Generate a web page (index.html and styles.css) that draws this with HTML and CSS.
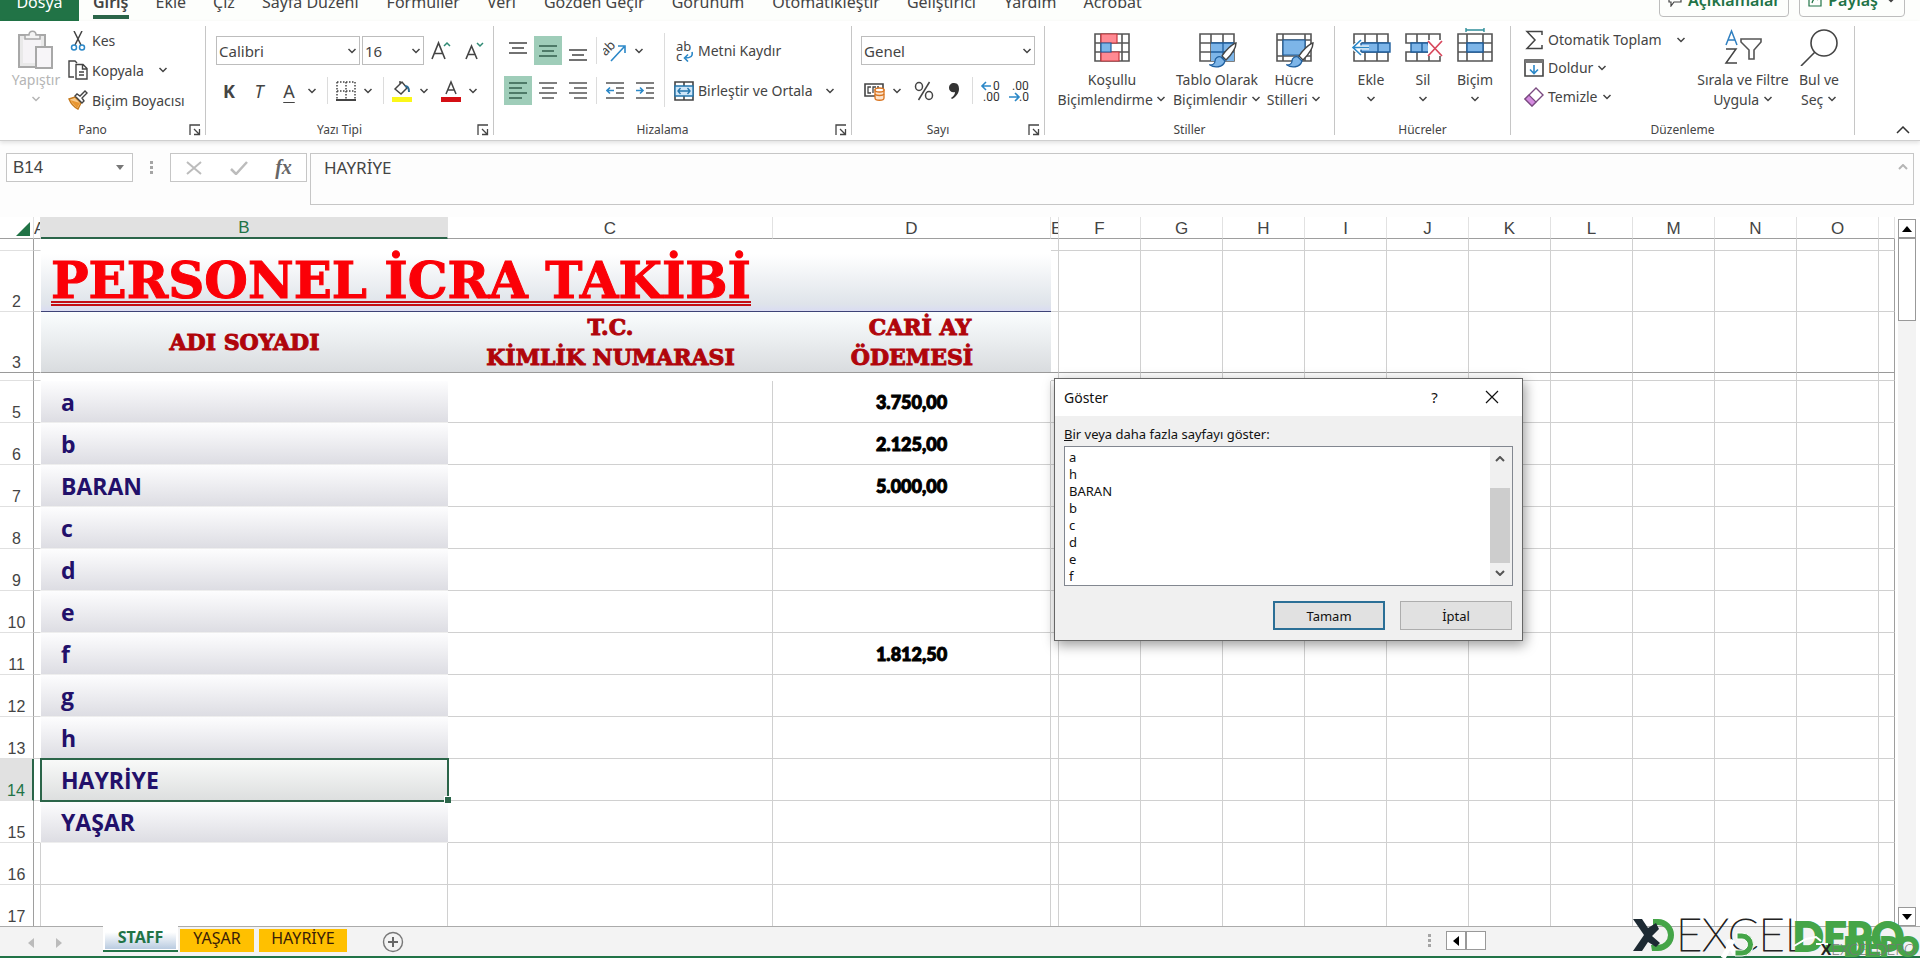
FILE: index.html
```html
<!DOCTYPE html>
<html lang="tr">
<head>
<meta charset="utf-8">
<title>Personel İcra Takibi</title>
<link rel="stylesheet" href="styles.css">
</head>
<body>
<svg class="defs" aria-hidden="true">
  <symbol id="chev" viewBox="0 0 10 6"><path d="M1.5 1l3.5 3.5L8.5 1" fill="none" stroke="currentColor" stroke-width="1.5"/></symbol>
  <symbol id="launch" viewBox="0 0 12 12"><path d="M1 11V1h10M5 5l5 5M10.500 5v5.500H5" fill="none" stroke="#444" stroke-width="1.300"/></symbol>
  <symbol id="brush" viewBox="0 0 28 26"><path d="M27 1c-4 1-11 8-14 13l4 4C22 13 27 6 27 1z" fill="#fff" stroke="#444" stroke-width="1.400"/><path d="M12 15c-3-1-6 1-6 4 0 2-2 4-5 4 4 3 13 3 15-4z" fill="#7db5e8" stroke="#1f5f9e" stroke-width="1.300"/></symbol>
</svg>
<div class="app">
  <header class="tabs">
    <button class="tab file">Dosya</button>
    <nav class="tab-list">
      <button class="tab active">Giriş</button>
      <button class="tab">Ekle</button>
      <button class="tab">Çiz</button>
      <button class="tab">Sayfa Düzeni</button>
      <button class="tab">Formüller</button>
      <button class="tab">Veri</button>
      <button class="tab">Gözden Geçir</button>
      <button class="tab">Görünüm</button>
      <button class="tab">Otomatikleştir</button>
      <button class="tab">Geliştirici</button>
      <button class="tab">Yardım</button>
      <button class="tab">Acrobat</button>
    </nav>
    <div class="share-area">
      <button class="pill comments"><svg width="14" height="14" viewBox="0 0 14 14"><path d="M1 1h12v8H6l-3 4V9H1z" fill="none" stroke="#444" stroke-width="1.200"/></svg>Açıklamalar</button>
      <button class="pill share"><svg width="14" height="14" viewBox="0 0 14 14"><path d="M6 2H1v11h12V7M4 10c1-4 3-6 8-6M9 1l3 3-3 3" fill="none" stroke="#217346" stroke-width="1.200"/></svg>Paylaş<svg class="chev"><use href="#chev"/></svg></button>
    </div>
  </header>

  <section class="ribbon" aria-label="Şerit">
    <div class="group">
      <div class="body pano">
        <button class="big faded"><span class="pic"><svg width="36" height="40" viewBox="0 0 36 40"><path d="M1 5h26v32H1z" fill="#e9e9e9" stroke="#a8a8a8" stroke-width="2"/><path d="M5 9h18v24H5z" fill="#f5f3f6"/><path d="M7 9V5h4c0-5 7-5 7 0h4v4z" fill="#f4f4f4" stroke="#a8a8a8" stroke-width="1.500"/><path d="M18 17h16v21H18z" fill="#f7f5f8" stroke="#a8a8a8" stroke-width="2"/></svg></span><span>Yapıştır</span><svg class="chev"><use href="#chev"/></svg></button>
        <div class="stack">
          <button class="item"><svg width="20" height="20" viewBox="0 0 20 20"><path d="M6 0l7 14M14 0L7 14" stroke="#444" stroke-width="1.500"/><circle cx="6" cy="16.500" r="2.500" fill="none" stroke="#2b88c8" stroke-width="1.500"/><circle cx="14" cy="16.500" r="2.500" fill="none" stroke="#2b88c8" stroke-width="1.500"/></svg>Kes</button>
          <button class="item"><svg width="20" height="20" viewBox="0 0 20 20"><path d="M6 17H1V1h6l2 2M8 4.500h7l4 4V19H8zM14.500 5v4H19M11 12h5M11 15h5" fill="none" stroke="#444" stroke-width="1.400"/></svg>Kopyala<svg class="chev far"><use href="#chev"/></svg></button>
          <button class="item"><svg width="20" height="20" viewBox="0 0 20 20"><path d="M1 9l6-2 6 6-3 6C6 17 3 14 1 9z" fill="#f7c98a" stroke="#c77a1c" stroke-width="1.400"/><path d="M2 10l10 3-3 5z" fill="#e8952f"/><path d="M7 6l2-2 3 2 5-5 2 2-5 5 2 3-2 2z" fill="#fff" stroke="#444" stroke-width="1.400"/></svg>Biçim Boyacısı</button>
        </div>
      </div>
      <div class="foot"><span>Pano</span><button class="launch" aria-label="Pano ayarları"><svg width="12" height="12"><use href="#launch"/></svg></button></div>
    </div>

    <div class="group">
      <div class="body rows font-rows">
        <div class="row inset">
          <span class="combo w-font"><select aria-label="Yazı tipi"><option>Calibri</option></select><svg class="chev"><use href="#chev"/></svg></span>
          <span class="combo w-size"><select aria-label="Boyut"><option>16</option></select><svg class="chev"><use href="#chev"/></svg></span>
          <button class="sq wide" aria-label="Yazı tipini büyüt"><svg width="22" height="22" viewBox="0 0 22 22"><path d="M2 19L8.500 3l6.500 16M4.500 13.500h8" fill="none" stroke="#444" stroke-width="1.600"/><path d="M14 6l3-3 3 3" fill="none" stroke="#2f8a74" stroke-width="1.500"/></svg></button>
          <button class="sq wide" aria-label="Yazı tipini küçült"><svg width="22" height="22" viewBox="0 0 22 22"><path d="M4 19L9.500 6 15 19M6 14.500h7" fill="none" stroke="#444" stroke-width="1.600"/><path d="M15 3l3 3 3-3" fill="none" stroke="#2f8a74" stroke-width="1.500"/></svg></button>
        </div>
        <div class="row">
          <button class="sq wide glyph bold">K</button>
          <button class="sq wide glyph ital">T</button>
          <button class="sq wide glyph under">A</button>
          <button class="dd"><svg class="chev"><use href="#chev"/></svg></button>
          <i class="sep s7"></i>
          <button class="ic"><svg width="20" height="20" viewBox="0 0 20 20"><path d="M1 1h18M1 10h18M1 1v18M10 1v18M19 1v18" fill="none" stroke="#444" stroke-width="1.500" stroke-dasharray="1.500 1.500"/><path d="M0 19h20" stroke="#444" stroke-width="2"/></svg></button>
          <button class="dd g3"><svg class="chev"><use href="#chev"/></svg></button>
          <i class="sep s7"></i>
          <button class="ic"><svg width="20" height="22" viewBox="0 0 20 22"><path d="M3 9l7-7 5 6-6 6zM8 4V1" fill="none" stroke="#444" stroke-width="1.500"/><path d="M13 6c3 0 4 2 4 6" fill="none" stroke="#2b6a94" stroke-width="2"/><path d="M0 17h20v5H0z" fill="#fbf719"/></svg></button>
          <button class="dd g3"><svg class="chev"><use href="#chev"/></svg></button>
          <button class="ic g8"><svg width="20" height="22" viewBox="0 0 20 22"><path d="M5 14L10 2l5 12M6.500 10h7" fill="none" stroke="#444" stroke-width="1.500"/><path d="M0 17h20v5H0z" fill="#d40f14"/></svg></button>
          <button class="dd g3"><svg class="chev"><use href="#chev"/></svg></button>
        </div>
      </div>
      <div class="foot"><span>Yazı Tipi</span><button class="launch" aria-label="Yazı tipi ayarları"><svg width="12" height="12"><use href="#launch"/></svg></button></div>
    </div>

    <div class="group">
      <div class="body align">
        <div class="rows">
          <div class="row gap2">
            <button class="sq"><svg width="18" height="20" viewBox="0 0 18 20"><path d="M0 2h18M3 7h12M0 12h18" stroke="#444" stroke-width="1.600"/></svg></button>
            <button class="sq on"><svg width="18" height="20" viewBox="0 0 18 20"><path d="M0 5h18M3 10h12M0 15h18" stroke="#345f4e" stroke-width="1.600"/></svg></button>
            <button class="sq"><svg width="18" height="20" viewBox="0 0 18 20"><path d="M0 9h18M3 14h12M0 19h18" stroke="#444" stroke-width="1.600"/></svg></button>
            <i class="sep"></i>
            <button class="sq"><svg width="24" height="24" viewBox="0 0 24 24"><text x="1" y="14" transform="rotate(-45 6 14)" font-size="13" font-family="Noto Sans" fill="#444">ab</text><path d="M8 22L21 8M15 7h7v7" fill="none" stroke="#2b88c8" stroke-width="1.600"/></svg></button>
            <button class="dd"><svg class="chev"><use href="#chev"/></svg></button>
          </div>
          <div class="row gap2">
            <button class="sq on"><svg width="18" height="18" viewBox="0 0 18 18"><path d="M0 1h18M0 6h13M0 11h18M0 16h13" stroke="#345f4e" stroke-width="1.600"/></svg></button>
            <button class="sq"><svg width="18" height="18" viewBox="0 0 18 18"><path d="M0 1h18M3 6h12M0 11h18M3 16h12" stroke="#555" stroke-width="1.600"/></svg></button>
            <button class="sq"><svg width="18" height="18" viewBox="0 0 18 18"><path d="M0 1h18M5 6h13M0 11h18M5 16h13" stroke="#555" stroke-width="1.600"/></svg></button>
            <i class="sep"></i>
            <button class="sq"><svg width="18" height="18" viewBox="0 0 18 18"><path d="M0 1h18M10 6h8M10 11h8M0 16h18" stroke="#555" stroke-width="1.600"/><path d="M8 8.500H1M4 5.500l-3 3 3 3" fill="none" stroke="#2b88c8" stroke-width="1.600"/></svg></button>
            <button class="sq"><svg width="18" height="18" viewBox="0 0 18 18"><path d="M0 1h18M10 6h8M10 11h8M0 16h18" stroke="#555" stroke-width="1.600"/><path d="M0 8.500h7M4 5.500l3 3-3 3" fill="none" stroke="#2b88c8" stroke-width="1.600"/></svg></button>
          </div>
        </div>
        <div class="rows wraps">
          <button class="item tall"><svg width="20" height="22" viewBox="0 0 20 22"><text x="2" y="11" font-size="13" font-family="Noto Sans" fill="#444">ab</text><text x="2" y="21" font-size="13" font-family="Noto Sans" fill="#444">c</text><path d="M18 12c1 4-1 6-7 6M14 14.500L10.500 18l3.500 3.500" fill="none" stroke="#2b88c8" stroke-width="1.600"/></svg>Metni Kaydır</button>
          <button class="item tall"><svg width="20" height="20" viewBox="0 0 20 20"><path d="M1 1h18v18H1zM10 1v4M10 15v4" fill="none" stroke="#444" stroke-width="1.600"/><path d="M1 5h18v10H1z" fill="#cfe6f8" stroke="#2576ac" stroke-width="1.400"/><path d="M4 10h12M6.500 7L4 10l2.500 3M13.500 7l2.500 3-2.500 3" fill="none" stroke="#2576ac" stroke-width="1.400"/></svg>Birleştir ve Ortala<svg class="chev near"><use href="#chev"/></svg></button>
        </div>
      </div>
      <div class="foot"><span>Hizalama</span><button class="launch" aria-label="Hizalama ayarları"><svg width="12" height="12"><use href="#launch"/></svg></button></div>
    </div>

    <div class="group">
      <div class="body rows num">
        <div class="row"><span class="combo w-num"><select aria-label="Sayı biçimi"><option>Genel</option></select><svg class="chev"><use href="#chev"/></svg></span></div>
        <div class="row">
          <button class="sq"><svg width="22" height="20" viewBox="0 0 22 20"><path d="M1 3h18v12H1z" fill="none" stroke="#444" stroke-width="1.600"/><path d="M7 6H4v6h3M12 6H9v6M15 6h-2" fill="none" stroke="#444" stroke-width="1.300"/><path d="M11 9v8c0 3 9 3 9 0V9z" fill="#fce3cc" stroke="#d9741f" stroke-width="1.300"/><ellipse cx="15.500" cy="9" rx="4.500" ry="2" fill="#fff" stroke="#d9741f" stroke-width="1.300"/><path d="M11 13c1 2 8 2 9 0" fill="none" stroke="#d9741f" stroke-width="1.300"/></svg></button>
          <button class="dd"><svg class="chev"><use href="#chev"/></svg></button>
          <button class="sq g5"><svg width="20" height="20" viewBox="0 0 20 20"><g fill="none" stroke="#444" stroke-width="1.500"><ellipse cx="5" cy="5.500" rx="3.500" ry="4"/><ellipse cx="15" cy="14.500" rx="3.500" ry="4"/><path d="M15.500 1L4.500 19"/></g></svg></button>
          <button class="sq g2"><svg width="12" height="18" viewBox="0 0 12 18"><path d="M6 1c4 0 5 3 5 6 0 4-3 8-7 10l-1-1c3-2 4-4 4-6-3 1-6-1-6-4s2-5 5-5z" fill="#333"/></svg></button>
          <i class="sep"></i>
          <button class="sq"><svg width="22" height="22" viewBox="0 0 22 22"><path d="M11 6H2M6 2L2 6l4 4" fill="none" stroke="#2b88c8" stroke-width="1.600"/><text x="13" y="10" font-size="12" font-family="Roboto" fill="#333">0</text><text x="3" y="21" font-size="12" font-family="Roboto" fill="#333">.00</text></svg></button>
          <button class="sq"><svg width="22" height="22" viewBox="0 0 22 22"><path d="M1 17h10M7 13l4 4-4 4" fill="none" stroke="#2b88c8" stroke-width="1.600"/><text x="4" y="10" font-size="12" font-family="Roboto" fill="#333">.00</text><text x="11" y="21" font-size="12" font-family="Roboto" fill="#333">.0</text></svg></button>
        </div>
      </div>
      <div class="foot"><span>Sayı</span><button class="launch" aria-label="Sayı ayarları"><svg width="12" height="12"><use href="#launch"/></svg></button></div>
    </div>

    <div class="group">
      <div class="body styles">
        <button class="big"><span class="pic"><svg width="38" height="38" viewBox="0 0 38 38"><g fill="#fff" stroke="#555" stroke-width="1.600"><path d="M2 6h34v27H2zM2 15h34M2 24h34M8 6v27M29 6v27"/></g><path d="M8 6h16v9H8zM8 24h18v9H8z" fill="#ff8a93" stroke="#c8383f" stroke-width="1.200"/><path d="M8 15h10v9H8z" fill="#7db5e8" stroke="#1f5f9e" stroke-width="1.200"/></svg></span><span>Koşullu</span><span>Biçimlendirme <svg class="chev"><use href="#chev"/></svg></span></button>
        <button class="big"><span class="pic"><svg width="42" height="40" viewBox="0 0 42 40"><path d="M4 6h34v27H4zM4 15h34M4 24h34M15 6v27M27 6v27" fill="#fff" stroke="#555" stroke-width="1.600"/><path d="M15 15h23v18H15z" fill="#7db5e8"/><path d="M15 24h23M27 15v18M15 15h23" stroke="#1f5f9e" stroke-width="1.300"/><svg x="13" y="14" width="28" height="26"><use href="#brush"/></svg></svg></span><span>Tablo Olarak</span><span>Biçimlendir <svg class="chev"><use href="#chev"/></svg></span></button>
        <button class="big"><span class="pic"><svg width="42" height="40" viewBox="0 0 42 40"><path d="M4 6h34v27H4zM4 12h34M4 28h34M10 6v27M32 6v27" fill="#fff" stroke="#555" stroke-width="1.600"/><path d="M10 12h22v15H10z" fill="#7db5e8" stroke="#1f5f9e" stroke-width="1.200"/><svg x="13" y="14" width="28" height="26"><use href="#brush"/></svg></svg></span><span>Hücre</span><span>Stilleri <svg class="chev"><use href="#chev"/></svg></span></button>
      </div>
      <div class="foot"><span>Stiller</span></div>
    </div>

    <div class="group">
      <div class="body cells">
        <button class="big"><span class="pic"><svg width="40" height="38" viewBox="0 0 40 38"><path d="M3 6h34v27H3zM3 15h34M3 24h34M14 6v27M26 6v27" fill="#fff" stroke="#555" stroke-width="1.600"/><path d="M10 15h29v9H10z" fill="#7db5e8" stroke="#1f5f9e" stroke-width="1.400"/><path d="M27 15v9" stroke="#1f5f9e" stroke-width="1.400"/><path d="M18 19.500H2M10 12l-8 7.500 8 7.500" fill="none" stroke="#fff" stroke-width="4"/><path d="M18 19.500H2M10 12l-8 7.500 8 7.500" fill="none" stroke="#2b88c8" stroke-width="1.600"/></svg></span><span>Ekle</span><svg class="chev"><use href="#chev"/></svg></button>
        <button class="big"><span class="pic"><svg width="40" height="38" viewBox="0 0 40 38"><path d="M3 6h34v9H3zM3 24h34v9H3zM14 6v9M26 6v9M14 24v9M26 24v9" fill="#fff" stroke="#555" stroke-width="1.600"/><path d="M8 15h17l2 9H8z" fill="#7db5e8" stroke="#1f5f9e" stroke-width="1.400"/><path d="M19 15v9" stroke="#1f5f9e" stroke-width="1.400"/><path d="M25 12h15v16H25z" fill="#fff"/><path d="M25 13l14 15M39 13L25 28" stroke="#d8475c" stroke-width="1.700"/></svg></span><span>Sil</span><svg class="chev"><use href="#chev"/></svg></button>
        <button class="big"><span class="pic"><svg width="40" height="38" viewBox="0 0 40 38"><path d="M3 6h34v27H3zM3 15h34M3 24h34M12 6v27M28 6v27" fill="#fff" stroke="#555" stroke-width="1.600"/><path d="M12 15h16v9H12z" fill="#7db5e8" stroke="#1f5f9e" stroke-width="1.400"/><path d="M11 2h18M11 0v4M29 0v4" stroke="#2f8f9a" stroke-width="1.400"/></svg></span><span>Biçim</span><svg class="chev"><use href="#chev"/></svg></button>
      </div>
      <div class="foot"><span>Hücreler</span></div>
    </div>

    <div class="group">
      <div class="body edit">
        <div class="stack">
          <button class="item"><svg width="20" height="20" viewBox="0 0 20 20"><path d="M18 5V1.500H3L11 10l-8 8.500h15V15" fill="none" stroke="#444" stroke-width="1.500"/></svg>Otomatik Toplam<svg class="chev far"><use href="#chev"/></svg></button>
          <button class="item"><svg width="20" height="20" viewBox="0 0 20 20"><path d="M1 2h18v16H1z" fill="#fff" stroke="#444" stroke-width="1.600"/><path d="M1 2h18v3H1z" fill="#777"/><path d="M10 7v8M6 11.500l4 4 4-4" fill="none" stroke="#2b88c8" stroke-width="1.600"/></svg>Doldur<svg class="chev"><use href="#chev"/></svg></button>
          <button class="item"><svg width="20" height="20" viewBox="0 0 20 20"><path d="M1 12L12 1l7 7L8 19z" fill="#fff" stroke="#7a4a80" stroke-width="1.400"/><path d="M1 12l4-4 7 7-4 4z" fill="#d58be0" stroke="#7a4a80" stroke-width="1.200"/></svg>Temizle<svg class="chev"><use href="#chev"/></svg></button>
        </div>
        <button class="big"><span class="pic"><svg width="38" height="38" viewBox="0 0 38 38"><path d="M2 17L7.500 3 13 17M4 12h7" fill="none" stroke="#2f7fc0" stroke-width="1.500"/><path d="M2 21h10L2 35h11" fill="none" stroke="#444" stroke-width="1.500"/><path d="M17 11h20v3l-7 8v9h-5v-9l-8-8z" fill="#fff" stroke="#555" stroke-width="1.600"/></svg></span><span>Sırala ve Filtre</span><span>Uygula <svg class="chev"><use href="#chev"/></svg></span></button>
        <button class="big"><span class="pic"><svg width="38" height="38" viewBox="0 0 38 38"><circle cx="24" cy="15" r="13" fill="#fff" stroke="#444" stroke-width="1.600"/><path d="M15 24L1 38" stroke="#444" stroke-width="1.600"/></svg></span><span>Bul ve</span><span>Seç <svg class="chev"><use href="#chev"/></svg></span></button>
      </div>
      <div class="foot"><span>Düzenleme</span></div>
    </div>
    <button class="collapse" aria-label="Şeridi daralt"><svg width="14" height="8" viewBox="0 0 14 8"><path d="M1 7l6-6 6 6" fill="none" stroke="#333" stroke-width="1.500"/></svg></button>
  </section>

  <section class="formula">
    <div class="namebox"><input aria-label="Ad kutusu" value="B14"><svg width="8" height="5" viewBox="0 0 8 5"><path d="M0 0h8L4 5z" fill="#777"/></svg></div>
    <span class="dots"><i></i><i></i><i></i></span>
    <div class="fx-buttons">
      <button aria-label="İptal et"><svg width="16" height="14" viewBox="0 0 16 14"><path d="M1 1l14 12M15 1L1 13" stroke="#bcbcbc" stroke-width="2"/></svg></button>
      <button aria-label="Gir"><svg width="18" height="14" viewBox="0 0 18 14"><path d="M1 8l5 5L17 1" fill="none" stroke="#bcbcbc" stroke-width="2.500"/></svg></button>
      <button class="fx" aria-label="İşlev ekle">fx</button>
    </div>
    <div class="fx-field"><textarea aria-label="Formül çubuğu">HAYRİYE</textarea><svg width="10" height="6" viewBox="0 0 10 6"><path d="M1 5l4-4 4 4" fill="none" stroke="#b5b5b5" stroke-width="2"/></svg></div>
  </section>

  <main class="sheet">
    <div class="grid-wrap">
      <table class="grid">
        <colgroup><col class="c-h"><col class="c-a"><col class="c-b"><col class="c-c"><col class="c-d"><col class="c-e"><col class="c-n" span="10"><col></colgroup>
        <thead><tr><th class="corner"><svg width="14" height="14" viewBox="0 0 14 14"><path d="M14 0v14H0z" fill="#217346"/></svg></th><th>A</th><th class="sel">B</th><th>C</th><th>D</th><th>E</th><th>F</th><th>G</th><th>H</th><th>I</th><th>J</th><th>K</th><th>L</th><th>M</th><th>N</th><th>O</th><th></th></tr></thead>
        <tbody id="rows">
          <tr class="r1"><th></th><td></td><td class="bare"></td><td class="bare"></td><td class="bare"></td></tr>
          <tr class="r2"><th>2</th><td class="plain"></td><td class="title" colspan="3"><span>PERSONEL İCRA TAKİBİ</span></td></tr>
          <tr class="r3"><th>3</th><td class="plain"></td><td class="head">ADI SOYADI</td><td class="head">T.C.<br>KİMLİK NUMARASI</td><td class="head"><span class="first">CARİ AY</span><br>ÖDEMESİ</td></tr>
          <tr class="r4"><th></th><td></td><td class="bare"></td><td class="bare"></td><td class="bare"></td></tr>
          <tr><th>5</th><td class="plain"></td><td class="name">a</td><td></td><td class="amt">3.750,00</td></tr>
          <tr><th>6</th><td class="plain"></td><td class="name">b</td><td></td><td class="amt">2.125,00</td></tr>
          <tr><th>7</th><td class="plain"></td><td class="name">BARAN</td><td></td><td class="amt">5.000,00</td></tr>
          <tr><th>8</th><td class="plain"></td><td class="name">c</td><td></td><td></td></tr>
          <tr><th>9</th><td class="plain"></td><td class="name">d</td><td></td><td></td></tr>
          <tr><th>10</th><td class="plain"></td><td class="name">e</td><td></td><td></td></tr>
          <tr><th>11</th><td class="plain"></td><td class="name">f</td><td></td><td class="amt">1.812,50</td></tr>
          <tr><th>12</th><td class="plain"></td><td class="name">g</td><td></td><td></td></tr>
          <tr><th>13</th><td class="plain"></td><td class="name">h</td><td></td><td></td></tr>
          <tr><th class="sel">14</th><td class="plain"></td><td class="name current">HAYRİYE</td><td></td><td></td></tr>
          <tr><th>15</th><td class="plain"></td><td class="name">YAŞAR</td><td></td><td></td></tr>
          <tr><th>16</th><td></td><td></td><td></td><td></td></tr>
          <tr><th>17</th><td></td><td></td><td></td><td></td></tr>
        </tbody>
      </table>
    </div>
    <div class="vscroll">
      <button aria-label="Yukarı kaydır"><svg width="10" height="6" viewBox="0 0 10 6"><path d="M5 0l5 6H0z"/></svg></button>
      <div class="thumb"></div>
      <div class="track"></div>
      <button aria-label="Aşağı kaydır"><svg width="10" height="6" viewBox="0 0 10 6"><path d="M0 0h10L5 6z"/></svg></button>
    </div>
  </main>

  <footer class="bottom">
    <div class="nav-arrows">
      <button aria-label="Önceki sayfa"><svg width="6" height="10" viewBox="0 0 6 10"><path d="M6 0v10L0 5z" fill="#bbb"/></svg></button>
      <button aria-label="Sonraki sayfa"><svg width="6" height="10" viewBox="0 0 6 10"><path d="M0 0v10l6-5z" fill="#bbb"/></svg></button>
    </div>
    <button class="sheet-tab current-tab"><span>STAFF</span></button>
    <button class="sheet-tab orange">YAŞAR</button>
    <button class="sheet-tab orange last">HAYRİYE</button>
    <button class="add" aria-label="Yeni sayfa"><svg width="22" height="22" viewBox="0 0 22 22"><circle cx="11" cy="11" r="9.500" fill="none" stroke="#777" stroke-width="1.400"/><path d="M11 6v10M6 11h10" stroke="#666" stroke-width="2"/></svg></button>
    <div class="hscroll">
      <span class="dots"><i></i><i></i><i></i></span>
      <button aria-label="Sola kaydır"><svg width="6" height="10" viewBox="0 0 6 10"><path d="M6 0v10L0 5z"/></svg></button>
      <div class="hthumb"></div>
    </div>
  </footer>
  <div class="status"></div>

  <svg class="brand" width="290" height="42" viewBox="0 0 290 42">
    <path d="M23 3h5a16 16 0 0 1 0 32h-6l-1-6h7a10 10 0 0 0 0-20h-5z" fill="#45a548"/>
    <path d="M3 3h9l6 9 8-5 3 6-7 7 8 7-4 4-8-5-6 9H3l11-16z" fill="#1d2a33"/>
    <text class="thin" x="46" y="35">EXCEL</text>
    <text class="heavy" x="163" y="35">DEPO</text>
    <path d="M93 42l10-18M97 24l8 14" stroke="#fff" stroke-width="5"/>
    <path d="M107 17h5a11 11 0 0 1 0 23h-7v-6h7a5 5 0 0 0 0-11h-5z" fill="#45a548" stroke="#fff"/>
    <path d="M164 30l12-7 10-2 5 4M186 28h12" fill="none" stroke="#fff" stroke-width="2"/>
    <text class="heavy small" x="214" y="40">DEPO</text>
    <text class="tiny" x="191" y="39"><tspan class="tiny-x">X</tspan>EXCELDEPO</text>
  </svg>

  <div class="dialog" role="dialog" aria-labelledby="dlg-title">
    <div class="dlg-bar"><h2 id="dlg-title">Göster</h2><button aria-label="Yardım">?</button><button aria-label="Kapat"><svg width="14" height="14" viewBox="0 0 14 14"><path d="M1 1l12 12M13 1L1 13" stroke="#111" stroke-width="1.200"/></svg></button></div>
    <div class="dlg-body">
      <label for="sheets"><u>B</u>ir veya daha fazla sayfayı göster:</label>
      <div class="listbox">
        <select id="sheets" size="8"><option>a</option><option>h</option><option>BARAN</option><option>b</option><option>c</option><option>d</option><option>e</option><option>f</option></select>
        <div class="lb-scroll">
          <svg width="10" height="6" viewBox="0 0 10 6"><path d="M1 5l4-4 4 4" fill="none" stroke="#555" stroke-width="2"/></svg>
          <div class="lb-thumb"></div>
          <svg width="10" height="6" viewBox="0 0 10 6"><path d="M1 1l4 4 4-4" fill="none" stroke="#555" stroke-width="2"/></svg>
        </div>
      </div>
      <div class="dlg-actions"><button class="primary">Tamam</button><button>İptal</button></div>
    </div>
  </div>
</div>
<script src="grid.js"></script>
</body>
</html>
```

FILE: grid.js
```js
// Fill every row with the empty cells of columns E to P.
const EMPTY_COLUMNS = 12;
for (const row of document.getElementById("rows").rows) {
  for (let i = 0; i < EMPTY_COLUMNS; i++) row.insertCell();
}
```

FILE: styles.css
```css
* { box-sizing: border-box; }
body { margin: 0; font-family: "Noto Sans", "Open Sans", sans-serif; color: #444; background: #fff; }
button, input, select, textarea { font: inherit; color: inherit; background: none; border: 0; padding: 0; margin: 0; border-radius: 0; }
button { white-space: nowrap; }
svg { flex: none; }
.defs { display: none; }
.app { position: relative; display: flex; flex-direction: column; height: 100vh; overflow: hidden; }

/* Tabs */
.tabs { display: flex; align-items: flex-end; flex: none; height: 21px; overflow: hidden; background: #fdfefc; font-size: 16px; }
.tab { flex: none; line-height: 22px; padding-bottom: 2px; border-bottom: 4px solid transparent; margin-bottom: 2px; }
.file { background: #217346; color: #fff; width: 79px; padding-bottom: 8px; border: 0; margin: 0; }
.tab-list { display: flex; gap: 27px; margin-left: 14px; }
.tab-list .tab:nth-child(2n+5) { margin-left: 1px; }
.active { font-weight: 600; border-color: #2b6549; }
.share-area { display: flex; gap: 10px; margin: 0 15px 4px auto; }
.pill { display: flex; align-items: center; gap: 6px; padding: 0 8px 2px; height: 32px; border: 1px solid #bdbdbd; border-radius: 4px; color: #217346; font-weight: 600; }
.chev { width: 10px; height: 6px; color: #444; }
.share .chev { margin-left: 2px; }

/* Ribbon */
.ribbon { position: relative; z-index: 1; flex: none; display: grid; grid-template-columns: 206px 288px 358px 193px 290px 176px 344px 1fr; padding: 5px 0; height: 120px; border-bottom: 1px solid #cfcfcf; box-shadow: 0 2px 4px #0000001c; background: #fff; font-size: 15px; }
.group { display: flex; flex-direction: column; height: 109px; border-right: 1px solid #c6c6c6; }
.body { flex: 1; display: flex; min-height: 0; }
.foot { display: flex; align-items: center; height: 10px; font-size: 12px; line-height: 10px; }
.foot span { flex: 1; text-align: center; }
.launch { width: 20px; height: 12px; padding-left: 4px; line-height: 10px; display: flex; justify-content: flex-start; }
.big { display: flex; flex-direction: column; align-items: center; line-height: 20px; padding-top: 2px; font-size: 14px; }
.pic { display: flex; height: 42px; align-items: flex-start; }
.big > .chev { margin-top: 6px; }
.big span .chev { vertical-align: 3px; }
.stack { display: flex; flex-direction: column; }
.item { display: flex; align-items: center; gap: 4px; height: 30px; font-size: 14px; }
.far { margin-left: 10px; }
.near { margin-left: 8px; }
.faded, .faded .chev { color: #b5b5b5; }
.pano .big { width: 68px; padding: 4px 0 0 4px; }
.pano .pic { height: 40px; }
.pano .stack { flex: 1; }
.pano .item:first-child { height: 29px; }
.rows { display: flex; flex-direction: column; gap: 11px; padding-top: 10px; }
.row { display: flex; align-items: center; height: 29px; }
.inset { padding-left: 2px; gap: 2px; }
.gap2 .sq { margin-right: 2px; }
.font-rows { padding-left: 8px; }
.sq { display: flex; align-items: center; justify-content: center; width: 28px; height: 29px; }
.wide { width: 30px; }
.on { background: #9fcdb9; }
.dd { display: flex; align-items: center; justify-content: center; width: 16px; height: 29px; }
.ic { display: flex; align-items: center; justify-content: center; width: 22px; height: 29px; }
.g2 { margin-left: 2px; }
.g3 { margin-left: 3px; }
.g5 { margin-left: 5px; }
.g8 { margin-left: 8px; }
.glyph { font-size: 18px; }
.bold { font-weight: 700; }
.ital { font-style: italic; }
.under { text-decoration: underline; text-underline-offset: 4px; }
.sep { width: 1px; height: 27px; background: #dcdcdc; margin: 0 4px; }
.align .sep { margin: 0 4px 0 2px; }
.row .s7 { margin: 0 7px; }
.combo { position: relative; display: flex; align-items: center; height: 29px; border: 1px solid #bdbdbd; }
.combo select { appearance: none; width: 100%; height: 27px; padding-left: 2px; font-size: 15px; outline: 0; }
.combo .chev { position: absolute; right: 2px; pointer-events: none; }
.w-font { width: 144px; }
.w-size { width: 62px; }
.w-num { width: 174px; }
.align { padding-left: 10px; }
.align > .rows:first-child { width: 160px; }
.wraps { border-left: 1px solid #dcdcdc; padding: 3px 0 0 9px; margin: 7px 0 18px; }
.tall { height: 29px; }
.num { padding-left: 9px; }
.styles { padding-left: 9px; }
.styles .big:nth-child(1) { width: 116px; }
.styles .big:nth-child(2) { width: 94px; }
.styles .big:nth-child(3) { width: 60px; }
.cells { padding-left: 10px; }
.cells .big { width: 52px; }
.edit { padding-left: 13px; }
.edit .stack { width: 168px; }
.edit .item { height: 29px; }
.edit .item:first-child { height: 27px; }
.edit .big:nth-child(2) { width: 102px; }
.edit .big:nth-child(3) { width: 50px; }
.collapse { justify-self: end; align-self: end; margin: 0 10px 0 0; line-height: 8px; height: 12px; }

/* Formula bar */
.formula { flex: none; display: flex; align-items: flex-start; padding: 12px 6px; height: 76px; background: #fdfdfd; }
.namebox { display: flex; align-items: center; width: 127px; height: 29px; padding-right: 8px; border: 1px solid #c6c6c6; background: #fff; }
.namebox input { flex: 1; min-width: 0; padding-left: 6px; font: 17px "Liberation Sans", sans-serif; outline: 0; }
.dots { display: flex; flex-direction: column; gap: 2px; }
.dots i { width: 3px; height: 3px; background: #a5a5a5; }
.formula .dots { margin: 8px 17px 0; }
.fx-buttons { display: flex; width: 137px; height: 29px; border: 1px solid #c6c6c6; background: #fff; }
.fx-buttons button { flex: 1; display: flex; align-items: center; justify-content: center; }
.fx-buttons .fx { font: italic bold 20px "Liberation Serif", serif; color: #666; }
.fx-field { flex: 1; display: flex; justify-content: space-between; margin-left: 3px; height: 52px; padding: 2px 5px 0 13px; border: 1px solid #c6c6c6; background: #fdfdfd; }
.fx-field textarea { flex: 1; height: 46px; resize: none; outline: 0; font-size: 17px; line-height: 24px; overflow: hidden; }
.fx-field svg { margin-top: 8px; }

/* Sheet */
.sheet { flex: 1; display: flex; min-height: 0; }
.grid-wrap { flex: 1; min-width: 0; overflow: hidden; }
.grid { table-layout: fixed; width: 100%; border-spacing: 0; }
.c-h { width: 34px; }
.c-a { width: 7px; }
.c-b { width: 407px; }
.c-c { width: 325px; }
.c-d { width: 278px; }
.c-e { width: 8px; }
.c-n { width: 82px; }
.grid th, .grid td { padding: 0; overflow: hidden; border-right: 1px solid #d0d0d0; border-bottom: 1px solid #d0d0d0; }
.grid tbody tr { height: 42px; }
.grid thead th { height: 22px; padding-top: 2px; font: 17px/19px "Liberation Sans", sans-serif; color: #444; border-right-color: #e2e2e2; border-bottom-color: #9e9e9e; }
.grid thead .corner { text-align: right; padding-right: 3px; line-height: 14px; }
.corner svg { vertical-align: middle; }
.grid thead .sel { padding: 1px 0 0; background: #e1e1e1; color: #217346; border-bottom: 2px solid #2b6549; }
.grid tbody th { font: 16px/18px "Liberation Sans", sans-serif; color: #444; vertical-align: bottom; border-right-color: #9e9e9e; border-bottom-color: #e0e0e0; }
.grid tbody th.sel { background: #e1e1e1; color: #217346; border-right: 2px solid #2b6549; }
.grid .r1 { height: 12px; }
.grid .r2, .grid .r3 { height: 61px; }
.grid .r4 { height: 8px; }
.grid .r1 th, .grid .r4 th { font-size: 0; line-height: 0; }
.grid .r3 td, .grid .r3 th { border-bottom-color: #9a9a9a; }
.grid .bare { border-color: transparent; }
.grid .plain, .grid .r1 td:nth-child(2), .grid .r4 td:nth-child(2) { border-right-color: transparent; }
.grid td:last-child { border-right-color: #9e9e9e; }
.grid .title { background: linear-gradient(#fff 5%, #dfe4ea 88%, #dadcf2); border-right: 0; border-bottom-color: #3d4377; padding-left: 10px; overflow: visible; white-space: nowrap; }
.title span { display: block; font: bold 50px/60px "DejaVu Serif", serif; color: #fb0007; -webkit-text-stroke: 1px #fb0007; text-decoration: underline double #c40f14 2px; text-underline-offset: 3px; }
.grid .head { background: linear-gradient(#fafdfe, #d9dcdf); border-right: 0; text-align: center; font: bold 22px/30px "DejaVu Serif", serif; color: #b0050b; -webkit-text-stroke: 1px #b0050b; }
.first { padding-left: 16px; }
.grid .name { background: linear-gradient(#fdfdfe, #dddde3); border-right: 0; border-bottom-color: #eee; padding-left: 20px; font: bold 23px/30px "Open Sans", "Noto Sans", sans-serif; color: #22106a; }
.grid .amt { text-align: center; font: 900 18px/24px Lato, sans-serif; color: #000; -webkit-text-stroke: 1px #000; }
.grid .current { position: relative; overflow: visible; outline: 2px solid #2b6549; outline-offset: -1px; background: linear-gradient(#f9faf9, #dddfdf); }
.current::after { content: ""; position: absolute; right: -3px; bottom: -3px; width: 6px; height: 6px; background: #2b6549; border: solid #fff; border-width: 1px 0 0 1px; }
.vscroll { flex: none; width: 25px; padding: 2px 4px 0 3px; display: flex; flex-direction: column; }
.vscroll button { display: flex; align-items: center; justify-content: center; height: 19px; border: 1px solid #999; background: #fff; }
.thumb { height: 83px; border: 1px solid #999; background: #fff; }
.track { flex: 1; background: #f3f3f3; }

/* Sheet tabs */
.bottom { flex: none; display: flex; height: 30px; background: #f3f3f3; border-top: 1px solid #ababab; }
.nav-arrows { display: flex; gap: 22px; width: 103px; padding-left: 28px; }
.sheet-tab { height: 25px; font-size: 16px; line-height: 18px; padding-bottom: 6px; }
.current-tab { width: 75px; padding: 1px 2px; margin-top: -1px; height: 26px; background: #fff; border-bottom: 2px solid #217346; color: #217346; font-weight: 700; }
.current-tab span { display: block; background: linear-gradient(#fff 20%, #b9cbe0); height: 21px; }
.orange { width: 74px; height: 23px; margin: 2px 5px 0 2px; background: #ffc000; color: #3a1d08; }
.last { width: 88px; margin-left: 0; }
.add { display: flex; align-items: center; margin-left: 30px; height: 29px; }
.hscroll { display: flex; align-items: center; margin: 0 434px 0 auto; height: 27px; }
.hscroll .dots { margin-right: 15px; }
.hscroll button, .hthumb { display: flex; align-items: center; justify-content: center; width: 20px; height: 19px; border: 1px solid #999; background: #fff; }
.status { flex: none; height: 2px; background: #217346; }
.brand { position: absolute; right: 0; bottom: 0; }
.thin { font: 100 45px Lato, sans-serif; fill: #222; stroke: #222; stroke-width: 1px; }
.heavy { font: 900 40px Lato, sans-serif; fill: #45a548; stroke: #45a548; stroke-width: 2px; }
.small { font-size: 27px; }
.tiny { font: 300 15px Lato, sans-serif; fill: #777; }
.tiny-x { font-weight: 900; fill: #222; }

/* Dialog */
.dialog { position: absolute; z-index: 2; left: 1054px; top: 378px; width: 469px; border: 1px solid #666; background: #f0f0f0; box-shadow: 2px 4px 12px #0006; color: #111; }
.dlg-bar { display: flex; align-items: center; height: 37px; padding: 0 2px 1px 9px; background: #fff; }
.dlg-bar h2 { flex: 1; margin: 0; font-size: 14px; font-weight: 400; }
.dlg-bar button { width: 57px; height: 36px; font-size: 15px; display: flex; align-items: center; justify-content: center; }
.dlg-body { padding: 8px 9px 10px; font-size: 13px; }
.dlg-body label { display: block; line-height: 20px; margin-bottom: 2px; }
.listbox { display: flex; height: 140px; border: 1px solid #828790; background: #fff; }
.listbox select { flex: 1; height: 138px; padding-top: 1px; outline: 0; overflow: hidden; font-size: 13px; }
.listbox option { min-height: 17px; height: 17px; line-height: 17px; padding: 0 4px; }
.lb-scroll { display: flex; flex-direction: column; align-items: center; width: 22px; padding: 9px 2px 9px 0; background: #f0f0f0; }
.lb-thumb { width: 20px; height: 75px; margin: 26px 0 auto; background: #cdcdcd; }
.dlg-actions { display: flex; justify-content: flex-end; gap: 15px; margin: 15px 1px 0 0; }
.dlg-actions button { width: 112px; height: 29px; border: 1px solid #adadad; background: #e1e1e1; }
.dlg-actions .primary { border: 2px solid #2b6f96; }
```
